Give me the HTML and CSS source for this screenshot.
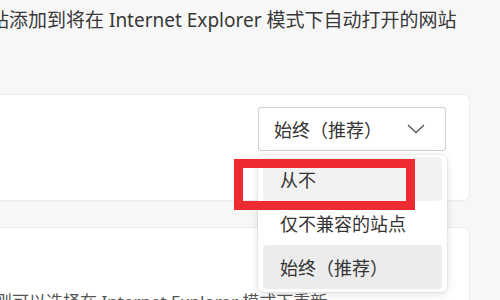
FILE: index.html
```html
<!DOCTYPE html>
<html lang="zh-CN">
<head>
<meta charset="utf-8">
<link rel="stylesheet" href="styles.css">
</head>
<body>
<div class="page">
  <p class="desc">站添加到将在 Internet Explorer 模式下自动打开的网站</p>
  <div class="card card-top">
    <div class="select">
      <span class="select-text">始终（推荐）</span>
      <svg class="chev" width="18" height="10" viewBox="0 0 18 10"><path d="M1 1 L9 8.5 L17 1" fill="none" stroke="#555" stroke-width="1.3"/></svg>
    </div>
  </div>
  <div class="card card-bottom">
    <p class="note">则可以选择在 Internet Explorer 模式下重新</p>
  </div>
  <div class="menu">
    <div class="item hover">从不</div>
    <div class="item">仅不兼容的站点</div>
    <div class="item selected">始终（推荐）</div>
  </div>
  <div class="mark"></div>
</div>
</body>
</html>
```
FILE: styles.css
```css
html, body {
  margin: 0;
  padding: 0;
}
body {
  background: #f7f7f7;
  font-family: "Noto Sans", "Noto Sans CJK SC", sans-serif;
  color: #333;
  width: 500px;
  height: 300px;
  overflow: hidden;
}
.page {
  position: relative;
  width: 500px;
  height: 300px;
  overflow: hidden;
}
.desc {
  margin: 0;
  padding-top: 8px;
  height: 87px;
  font-size: 19px;
  line-height: 24px;
  text-indent: -10px;
  white-space: nowrap;
  color: #383838;
}
.card {
  background: #fff;
  margin-left: -10px;
  width: 479px;
  border-radius: 6px;
  box-shadow: 0 0 0 1px #ececec, 0 1px 2px rgba(0,0,0,0.06);
}
.card-top {
  height: 105px;
  box-sizing: border-box;
  padding: 12px 23px 0 0;
  display: flex;
  justify-content: flex-end;
  align-items: flex-start;
}
.select {
  width: 188px;
  height: 44px;
  box-sizing: border-box;
  border: 1px solid #cfcfcf;
  border-radius: 3px;
  background: #fff;
  display: flex;
  align-items: center;
  justify-content: space-between;
  padding: 0 20px 0 15px;
}
.select-text {
  font-size: 18px;
  color: #333;
}
.chev {
  display: block;
}
.card-bottom {
  margin-top: 28px;
  height: 120px;
  box-sizing: border-box;
  padding-top: 63px;
}
.note {
  margin: 0;
  padding-left: 10px;
  font-size: 17px;
  line-height: 22px;
  text-indent: -5px;
  white-space: nowrap;
  color: #555;
}
.menu {
  position: absolute;
  left: 258px;
  top: 155px;
  width: 189px;
  box-sizing: border-box;
  padding: 2px 5px 3px;
  background: #fff;
  border-radius: 6px;
  box-shadow: 0 2px 8px rgba(0,0,0,0.12), 0 0 0 1px rgba(0,0,0,0.04);
}
.item {
  height: 44px;
  box-sizing: border-box;
  padding-left: 17px;
  display: flex;
  align-items: center;
  font-size: 18px;
  color: #333;
  border-radius: 4px;
}
.item.hover {
  background: #f2f2f2;
}
.item.selected {
  background: #ececec;
}
.mark {
  position: absolute;
  left: 234px;
  top: 159px;
  width: 181px;
  height: 51px;
  box-sizing: border-box;
  border: 9px solid #ee2b30;
}
```
